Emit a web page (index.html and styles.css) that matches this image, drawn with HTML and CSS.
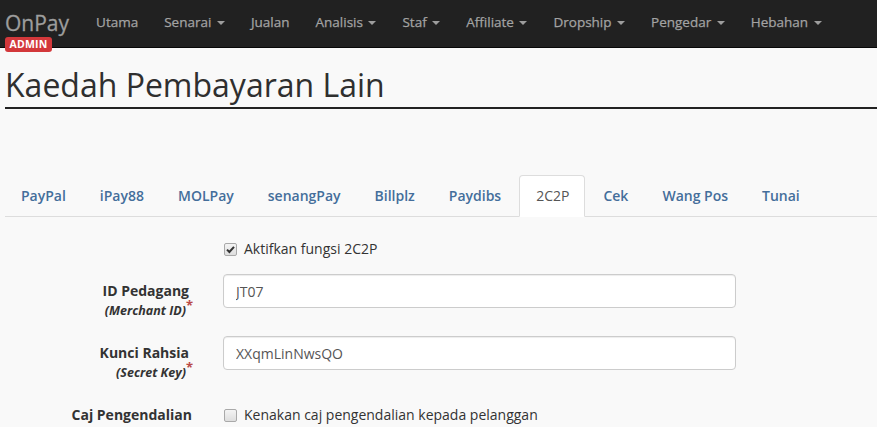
FILE: index.html
```html
<!DOCTYPE html>
<html lang="ms">
<head>
<meta charset="utf-8">
<title>Kaedah Pembayaran Lain</title>
<link rel="stylesheet" href="styles.css">
</head>
<body>
<nav class="navbar">
  <a class="brand" href="#">OnPay</a>
  <span class="badge">ADMIN</span>
  <ul class="nav">
    <li><a href="#">Utama</a></li>
    <li><a href="#">Senarai <span class="caret"></span></a></li>
    <li><a href="#">Jualan</a></li>
    <li><a href="#">Analisis <span class="caret"></span></a></li>
    <li><a href="#">Staf <span class="caret"></span></a></li>
    <li><a href="#">Affiliate <span class="caret"></span></a></li>
    <li><a href="#">Dropship <span class="caret"></span></a></li>
    <li><a href="#">Pengedar <span class="caret"></span></a></li>
    <li><a href="#">Hebahan <span class="caret"></span></a></li>
  </ul>
</nav>
<main class="page">
  <h1 class="title">Kaedah Pembayaran Lain</h1>
  <ul class="tabs">
    <li><a href="#">PayPal</a></li>
    <li><a href="#">iPay88</a></li>
    <li><a href="#">MOLPay</a></li>
    <li><a href="#">senangPay</a></li>
    <li><a href="#">Billplz</a></li>
    <li><a href="#">Paydibs</a></li>
    <li class="active"><a href="#">2C2P</a></li>
    <li><a href="#">Cek</a></li>
    <li><a href="#">Wang Pos</a></li>
    <li><a href="#">Tunai</a></li>
  </ul>
  <form class="form">
    <div class="row row-check">
      <div class="label"></div>
      <label class="check"><span class="box"><svg viewBox="0 0 13 13" width="13" height="13"><path d="M3 6.6 L5.4 9 L10 3.8" fill="none" stroke="#333" stroke-width="2"/></svg></span>Aktifkan fungsi 2C2P</label>
    </div>
    <div class="row">
      <div class="label"><span class="main">ID Pedagang</span><span class="sub">(Merchant ID)<sup>*</sup></span></div>
      <div class="field"><input class="input" type="text" value="JT07"></div>
    </div>
    <div class="row">
      <div class="label"><span class="main">Kunci Rahsia</span><span class="sub">(Secret Key)<sup>*</sup></span></div>
      <div class="field"><input class="input" type="text" value="XXqmLinNwsQO"></div>
    </div>
    <div class="row">
      <div class="label"><span class="main plain">Caj Pengendalian</span></div>
      <label class="check"><span class="box"></span>Kenakan caj pengendalian kepada pelanggan</label>
    </div>
  </form>
</main>
</body>
</html>
```
FILE: styles.css
```css
* { box-sizing: border-box; }
html, body { margin: 0; padding: 0; }
body {
  background: #f9f9f9;
  font-family: "Open Sans", "Noto Sans", sans-serif;
  font-size: 14px;
  line-height: 20px;
  color: #333;
  overflow: hidden;
}
a { text-decoration: none; }
ul { list-style: none; margin: 0; padding: 0; }

.navbar {
  position: relative;
  display: flex;
  align-items: flex-start;
  height: 48px;
  background: #212121;
  border-bottom: 1px solid #080808;
}
.brand {
  color: #9d9d9d;
  font-size: 21px;
  font-weight: 400;
  line-height: 24px;
  padding: 11px 14px 0 5px;
  -webkit-text-stroke: 0.3px #9d9d9d;
}
.badge {
  position: absolute;
  left: 5px;
  top: 37px;
  width: 47px;
  height: 15px;
  background: #d3383b;
  color: #fff;
  border-radius: 3px;
  font-size: 10.5px;
  font-weight: 700;
  line-height: 15px;
  text-align: center;
  letter-spacing: 0.2px;
  z-index: 2;
}
.nav { display: flex; }
.nav a {
  display: block;
  color: #a3a3a3;
  font-size: 13.5px;
  font-weight: 400;
  padding: 12px 13px 15px;
  white-space: nowrap;
  -webkit-text-stroke: 0.25px #a3a3a3;
}
.caret {
  display: inline-block;
  width: 0;
  height: 0;
  margin-left: 2px;
  vertical-align: middle;
  border-top: 4px solid #9d9d9d;
  border-left: 4px solid transparent;
  border-right: 4px solid transparent;
}

.page { padding-left: 5px; }
.title {
  margin: 19px 0 0;
  font-size: 32px;
  font-weight: 400;
  line-height: 35px;
  color: #2f2f2f;
  padding-bottom: 5px;
  border-bottom: 2px solid #222;
  white-space: nowrap;
}

.tabs {
  display: flex;
  margin-top: 66px;
  border-bottom: 1px solid #ddd;
}
.tabs li { margin-right: 2px; margin-bottom: -1px; }
.tabs a {
  display: block;
  padding: 10px 15px;
  color: #446e9b;
  font-size: 14px;
  font-weight: 600;
  border: 1px solid transparent;
  border-radius: 4px 4px 0 0;
  white-space: nowrap;
}
.tabs .active a {
  background: #fff;
  color: #555;
  font-weight: 400;
  font-size: 14px;
  padding: 10px 15px 10px 16px;
  border-color: #ddd #ddd transparent;
}

.form { padding-top: 22px; }
.row {
  display: grid;
  grid-template-columns: 188px 513px;
  column-gap: 30px;
  margin-bottom: 15px;
}
.row-check { margin-bottom: 15px; }
.label {
  display: flex;
  flex-direction: column;
  align-items: flex-end;
  text-align: right;
  padding-top: 7px;
  font-weight: 700;
}
.row-check .label { padding-top: 0; }
.label .main { padding-right: 4px; }
.label .main.plain { padding-right: 1px; }
.label .sub {
  font-size: 12.5px;
  font-style: italic;
  line-height: 20px;
}
.label sup {
  color: #b94a48;
  font-size: 13px;
  font-style: normal;
  line-height: 0;
  vertical-align: 0;
  position: relative;
  top: -5px;
  margin-left: 0;
}
.input {
  display: block;
  width: 513px;
  height: 34px;
  padding: 6px 12px;
  font-family: inherit;
  font-size: 14px;
  color: #555;
  background: #fff;
  border: 1px solid #ccc;
  border-radius: 4px;
  box-shadow: inset 0 1px 1px rgba(0,0,0,0.075);
}
.check {
  display: flex;
  align-items: center;
  color: #333;
  font-weight: 400;
}
.row:last-child .check { padding-top: 7px; align-items: flex-start; }
.row:last-child .check .box { margin-top: 4px; }
.box {
  display: inline-block;
  width: 13px;
  height: 13px;
  margin: 0 7px 0 1px;
  border: 1px solid #a9a9a9;
  border-radius: 2px;
  background: linear-gradient(#f4f4f4, #dedede);
  flex: none;
  position: relative;
}
.box svg { position: absolute; left: -1px; top: -1px; }
```
